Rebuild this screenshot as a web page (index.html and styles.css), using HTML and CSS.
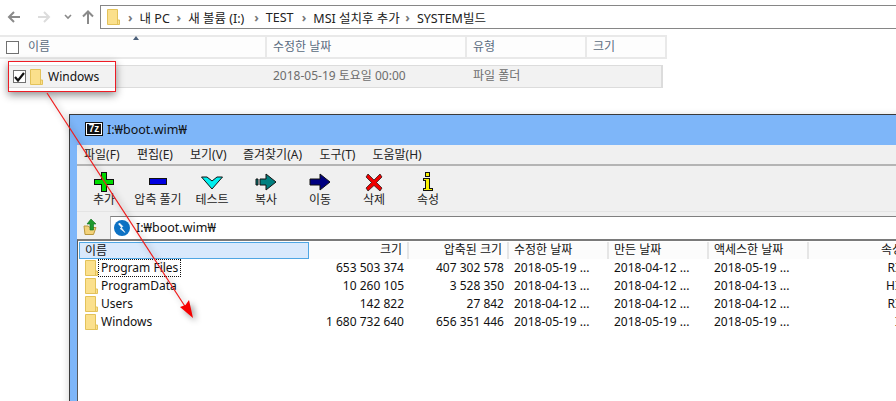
FILE: index.html
```html
<!DOCTYPE html>
<html lang="ko">
<head>
<meta charset="UTF-8">
<meta name="viewport" content="width=device-width, initial-scale=1.0">
<title>SYSTEM빌드</title>
<link rel="stylesheet" href="styles.css">
</head>
<body>
  <div class="explorer">
    <div class="nav">
      <div class="nav-btns">
        <svg class="nav-back" width="14" height="14" viewBox="0 0 14 14"><path d="M7 2 L2 7 L7 12 M2 7 H13" fill="none" stroke="#8a8a8a" stroke-width="2"/></svg>
        <svg class="nav-next" width="14" height="14" viewBox="0 0 14 14"><path d="M7 2 L12 7 L7 12 M12 7 H1" fill="none" stroke="#dcdcdc" stroke-width="2"/></svg>
        <svg class="nav-drop" width="8" height="6" viewBox="0 0 8 6"><path d="M1 1 L4 4 L7 1" fill="none" stroke="#8a8a8a" stroke-width="1.6"/></svg>
        <svg class="nav-up" width="12" height="14" viewBox="0 0 12 14"><path d="M1 6.5 L6 1.5 L11 6.5 M6 2 V14" fill="none" stroke="#8a8a8a" stroke-width="2"/></svg>
      </div>
      <div class="crumbs">
        <svg class="crumb-folder" width="13" height="16" viewBox="0 0 13 16"><use href="#folder"/></svg>
        <span class="sep">›</span><span class="crumb c1">내 PC</span>
        <span class="sep">›</span><span class="crumb c2">새 볼륨 (I:)</span>
        <span class="sep">›</span><span class="crumb c3">TEST</span>
        <span class="sep">›</span><span class="crumb c4">MSI 설치후 추가</span>
        <span class="sep">›</span><span class="crumb">SYSTEM빌드</span>
      </div>
    </div>
    <div class="sort-mark"></div>
    <div class="ex-head">
      <div class="ex-col ex-name"><span class="checkbox"></span>이름</div>
      <div class="ex-col ex-date">수정한 날짜</div>
      <div class="ex-col ex-type">유형</div>
      <div class="ex-col ex-size">크기</div>
    </div>
    <div class="ex-row">
      <div class="ex-name"></div>
      <div class="ex-date">2018-05-19 토요일 00:00</div>
      <div class="ex-type">파일 폴더</div>
    </div>
  </div>

  <!-- callout cropped over the selected row -->
  <div class="callout">
    <span class="checkbox checked"><svg width="11" height="10" viewBox="0 0 11 10"><path d="M1 5 L4 8.5 L10 1" fill="none" stroke="#111" stroke-width="2.2"/></svg></span>
    <svg width="13" height="16" viewBox="0 0 13 16"><use href="#folder"/></svg>
    <span class="callout-text">Windows</span>
  </div>

  <div class="zip-window">
    <div class="zip-title">
      <span class="zip-logo">7z</span>
      <span>I:₩boot.wim₩</span>
    </div>
    <div class="zip-client">
      <div class="menu">
        <span class="m1">파일(F)</span><span class="m2">편집(E)</span><span class="m3">보기(V)</span><span class="m4">즐겨찾기(A)</span><span class="m5">도구(T)</span><span>도움말(H)</span>
      </div>
      <div class="toolbar">
        <div class="tool">
          <svg width="20" height="20" viewBox="0 0 20 20" shape-rendering="crispEdges"><path d="M7 0 H13 V7 H20 V13 H13 V20 H7 V13 H0 V7 H7 Z" fill="#111"/><path d="M8 1 H12 V8 H19 V12 H12 V19 H8 V12 H1 V8 H8 Z" fill="#00e000"/></svg>
          <span>추가</span>
        </div>
        <div class="tool">
          <svg width="20" height="20" viewBox="0 0 20 20" shape-rendering="crispEdges"><path d="M1 6 H19 V13 H1 Z" fill="#111"/><path d="M2 7 H18 V12 H2 Z" fill="#0000e0"/></svg>
          <span>압축 풀기</span>
        </div>
        <div class="tool">
          <svg width="22" height="20" viewBox="0 0 22 20"><path d="M0.5 5 H6 L11 9 L16 5 H21.5 L11 17 Z" fill="#00f0f0" stroke="#111"/></svg>
          <span>테스트</span>
        </div>
        <div class="tool">
          <svg width="22" height="20" viewBox="0 0 22 20"><path d="M1 7 H3 V13 H1 Z M5 7 H11 V2 L21 10 L11 18 V13 H5 Z" fill="#008080" stroke="#111"/></svg>
          <span>복사</span>
        </div>
        <div class="tool">
          <svg width="22" height="20" viewBox="0 0 22 20"><path d="M1 7 H11 V2 L21 10 L11 18 V13 H1 Z" fill="#000080" stroke="#111"/></svg>
          <span>이동</span>
        </div>
        <div class="tool">
          <svg width="18" height="20" viewBox="0 0 18 20"><path d="M3 2 L9 8 L15 2 L17 5 L11.5 10.5 L17 16 L15 19 L9 13.5 L3 19 L1 16 L6.5 10.5 L1 5 Z" fill="#f00000" stroke="#111" stroke-width=".7"/></svg>
          <span>삭제</span>
        </div>
        <div class="tool">
          <svg width="12" height="20" viewBox="0 0 12 20" shape-rendering="crispEdges"><path d="M3 0 H8 V5 H3 Z M1 6 H8 V16 H11 V19 H1 V16 H3 V9 H1 Z" fill="#111"/><path d="M4 1 H7 V4 H4 Z M2 7 H7 V17 H10 V18 H2 V17 H4 V8 H2 Z" fill="#f8f000"/></svg>
          <span>속성</span>
        </div>
      </div>
      <div class="addr">
        <svg class="addr-up" width="15" height="18" viewBox="0 0 15 18"><path d="M1 8 H5 L7 9.500 H13 L10.500 16.500 H2 Z" fill="#f3d27a" stroke="#b8963c"/><path d="M8 1 L13 6 H10.500 V12 H7 V6 H4 Z" fill="#1e9a2e" stroke="#0d6b1b" stroke-width=".6"/></svg>
        <div class="addr-box">
          <svg width="16" height="16" viewBox="0 0 16 16"><circle cx="8" cy="8" r="8" fill="#0e72c4"/><path d="M5.500 3 L9 6.500 L7 7 L11 12.500 L6 8.500 L8 8 L4.500 4 Z" fill="#fff" stroke="#fff" stroke-width=".5"/></svg>
          <span>I:₩boot.wim₩</span>
        </div>
      </div>
      <div class="list">
        <div class="list-grid list-head">
          <div class="hd hd-name">이름</div>
          <div class="hd num">크기</div>
          <div class="hd num">압축된 크기</div>
          <div class="hd">수정한 날짜</div>
          <div class="hd">만든 날짜</div>
          <div class="hd">액세스한 날짜</div>
          <div class="hd num hd-attr">속성</div>
        </div>
        <div class="list-grid list-row">
          <div class="cell-name"><svg width="13" height="16" viewBox="0 0 13 16"><use href="#folder"/></svg><span class="focused">Program Files</span></div>
          <div class="num">653 503 374</div><div class="num">407 302 578</div>
          <div>2018-05-19 ...</div><div>2018-04-12 ...</div><div>2018-05-19 ...</div><div class="num">RI</div>
        </div>
        <div class="list-grid list-row">
          <div class="cell-name"><svg width="13" height="16" viewBox="0 0 13 16"><use href="#folder"/></svg><span>ProgramData</span></div>
          <div class="num">10 260 105</div><div class="num">3 528 350</div>
          <div>2018-04-13 ...</div><div>2018-04-12 ...</div><div>2018-04-13 ...</div><div class="num">HI</div>
        </div>
        <div class="list-grid list-row">
          <div class="cell-name"><svg width="13" height="16" viewBox="0 0 13 16"><use href="#folder"/></svg><span>Users</span></div>
          <div class="num">142 822</div><div class="num">27 842</div>
          <div>2018-04-12 ...</div><div>2018-04-12 ...</div><div>2018-04-12 ...</div><div class="num">RI</div>
        </div>
        <div class="list-grid list-row">
          <div class="cell-name"><svg width="13" height="16" viewBox="0 0 13 16"><use href="#folder"/></svg><span>Windows</span></div>
          <div class="num">1 680 732 640</div><div class="num">656 351 446</div>
          <div>2018-05-19 ...</div><div>2018-05-19 ...</div><div>2018-05-19 ...</div><div class="num">I</div>
        </div>
      </div>
    </div>
  </div>

  <svg class="arrow" width="896" height="401" viewBox="0 0 896 401">
    <path d="M47 93 L188 311" fill="none" stroke="#f01c1c" stroke-width="1.2"/>
    <path d="M193 318 L180 307 L185.500 305 L189 300 Z" fill="#f60000"/>
  </svg>

  <svg class="defs" width="0" height="0">
    <symbol id="folder" viewBox="0 0 13 16">
      <path d="M.5 .5 H10.500 V11 H12.500 V15.500 H.5 Z" fill="#fbe08c" stroke="#e3c25a"/>
      <path d="M10.500 11 V15.500" stroke="#e3c25a"/>
    </symbol>
  </svg>
</body>
</html>
```

FILE: styles.css
```css
* {
  box-sizing: border-box;
}

html, body {
  margin: 0;
  padding: 0;
}

body {
  position: relative;
  width: 896px;
  height: 401px;
  overflow: hidden;
  background: #fff;
  font-family: "Noto Sans", "Noto Sans CJK KR", sans-serif;
  font-size: 12px;
  color: #111;
}

/* explorer behind */
.explorer {
  height: 100px;
}

.nav {
  display: flex;
  height: 33px;
  padding-top: 5px;
}

.nav-btns {
  display: flex;
  align-items: center;
  width: 100px;
  height: 23px;
  padding-left: 7px;
}

.nav-next {
  margin-left: 16px;
}

.nav-drop {
  margin-left: 13px;
}

.nav-up {
  margin-left: 10px;
}

.crumbs {
  display: flex;
  align-items: center;
  flex: 1;
  height: 24px;
  padding-left: 6px;
  border: 1px solid #868686;
  border-right: 0;
  font-size: 12.500px;
  color: #222;
}

.sep {
  margin: 0 7px 0 8px;
  color: #777;
  font-weight: bold;
}

.crumb {
  white-space: nowrap;
}

.c1 { width: 29px; }
.c2 { width: 58px; }
.c3 { width: 28px; }
.c4 { width: 84px; }

.sort-mark {
  position: relative;
  z-index: 1;
  width: 0;
  height: 0;
  margin: 3px 0 -7px 133px;
  border: 3.500px solid transparent;
  border-top: 0;
  border-bottom: 4px solid #4c607a;
}

.ex-head {
  display: flex;
  width: 667px;
  height: 24px;
  margin-top: 2px;
  border-top: 2px solid #e9e9e9;
  border-bottom: 2px solid #e9e9e9;
  background: #fdfdfd;
  color: #5a6b80;
}

.ex-col {
  display: flex;
  align-items: center;
  padding: 0 0 2px 6px;
  border-right: 2px solid #e9e9e9;
}

.ex-head .ex-name { width: 267px; }
.ex-head .ex-date { width: 200px; }
.ex-head .ex-type { width: 120px; }
.ex-head .ex-size { width: 80px; }

.ex-head .checkbox {
  margin: 2px 9px 0 0;
}

.checkbox {
  display: flex;
  align-items: center;
  justify-content: center;
  width: 13px;
  height: 13px;
  border: 1px solid #707070;
  background: #fff;
}

.ex-row {
  display: flex;
  align-items: center;
  width: 654px;
  height: 23px;
  margin: 6px 0 0 9px;
  padding-bottom: 3px;
  border: 1px solid #dcdcdc;
  border-right-width: 2px;
  border-left: 0;
  background: #f2f2f2;
  color: #6d6d6d;
}

.ex-row .ex-name { width: 264px; }
.ex-row .ex-date { width: 200px; }

.callout {
  position: absolute;
  left: 8px;
  top: 61px;
  display: flex;
  align-items: center;
  gap: 4px;
  width: 108px;
  height: 31px;
  padding-left: 4px;
  border: 1px solid #ee1c25;
  box-shadow: 0 3px 8px rgba(0, 0, 0, 0.45);
  color: #111;
}

.callout-text {
  margin-bottom: 1px;
  margin-left: 1px;
}

/* 7-zip window */
.zip-window {
  position: absolute;
  left: 69px;
  top: 114px;
  width: 840px;
  height: 300px;
  padding-left: 1px;
  border: 1px solid #3a3a3a;
  background: #7eb6f9;
  box-shadow: -2px 0 6px rgba(0, 0, 0, 0.12);
}

.zip-title {
  display: flex;
  align-items: center;
  height: 30px;
  padding: 0 0 2px 15px;
  font-size: 12.500px;
}

.zip-logo {
  display: block;
  width: 16px;
  height: 12px;
  margin-right: 5px;
  border: 1px solid #fff;
  outline: 1px solid #111;
  background: #111;
  color: #fff;
  font-family: "Liberation Sans", sans-serif;
  font-size: 10px;
  font-weight: bold;
  line-height: 10px;
  text-align: center;
}

.zip-client {
  height: 270px;
  margin-left: 6px;
  background: #f0f0f0;
}

.menu {
  display: flex;
  align-items: center;
  height: 21px;
  padding: 0 0 2px 7px;
  border-bottom: 2px solid #b4b4b4;
  color: #222;
}

.m1, .m2, .m3 { width: 53px; }
.m4 { width: 76.500px; }
.m5 { width: 53px; }

.toolbar {
  display: flex;
  height: 46px;
  border-bottom: 1px solid #e4e4e4;
}

.tool {
  display: flex;
  flex-direction: column;
  align-items: center;
  width: 54px;
  padding-top: 6px;
  color: #222;
}

.tool span {
  line-height: 16px;
}

.addr {
  display: flex;
  align-items: flex-end;
  height: 27px;
}

.addr-up {
  margin: 0 12px 3px 6px;
}

.addr-box {
  display: flex;
  align-items: center;
  gap: 6px;
  flex: 1;
  height: 23px;
  padding: 0 0 1px 3px;
  border-top: 1px solid #7f7f7f;
  border-left: 1px solid #b0b0b0;
  background: #fff;
  font-size: 12.500px;
}

.list {
  height: 170px;
  padding: 1px 0 0 1px;
  border-top: 2px solid #7a7a7a;
  border-left: 1px solid #5a5a5a;
  background: #fff;
}

.list-grid {
  display: grid;
  grid-template-columns: 230px 100px 100px 100px 100px 100px 95px;
  white-space: nowrap;
}

.list-head {
  height: 17px;
  line-height: 15px;
  background: #fcfcfc;
}

.hd {
  padding-left: 5px;
  border-right: 2px solid #e6e6e6;
}

.hd-name {
  padding-left: 5px;
  border: 1px solid #4fa6e3;
  background: #d9e9fc;
}

.num {
  padding-right: 5px;
  text-align: right;
}

.hd.num {
  padding-left: 0;
  padding-right: 5px;
}

.hd.hd-attr {
  padding-right: 1px;
  border-right: 0;
}

.list-row {
  height: 18px;
  line-height: 18px;
}

.list-row > div:not(.num):not(.cell-name) {
  padding-left: 5px;
}

.cell-name {
  display: flex;
  align-items: center;
  padding-left: 6px;
}

.cell-name span {
  margin-left: 0;
  padding: 0 2px;
  border: 1px dotted transparent;
  line-height: 16px;
}

.cell-name .focused {
  border-color: #111;
}

.arrow {
  position: absolute;
  left: 0;
  top: 0;
  filter: drop-shadow(3px 3px 3px rgba(0, 0, 0, 0.4));
}

.defs {
  position: absolute;
}
```
